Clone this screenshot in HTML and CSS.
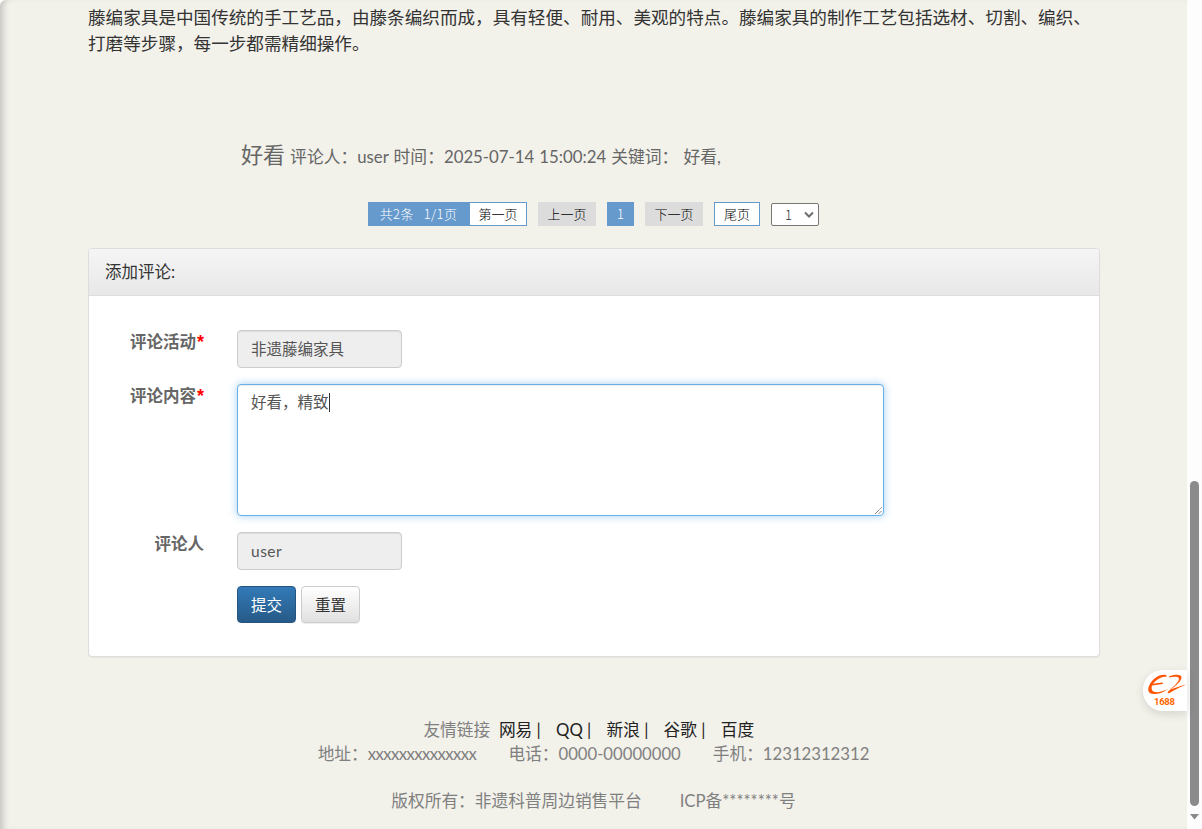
FILE: index.html
```html
<!DOCTYPE html>
<html lang="zh">
<head>
<meta charset="utf-8">
<title>评论</title>
<link rel="stylesheet" href="styles.css">
</head>
<body>
<div class="page">
  <main class="main">
    <p class="intro">藤编家具是中国传统的手工艺品，由藤条编织而成，具有轻便、耐用、美观的特点。藤编家具的制作工艺包括选材、切割、编织、打磨等步骤，每一步都需精细操作。</p>
    <div class="comment"><span class="comment-title">好看</span> 评论人：user 时间：2025-07-14 15:00:24 关键词： 好看,</div>
    <nav class="pager">
      <div class="pager-group">
        <span class="pg pg-info">共2条&nbsp;&nbsp;&nbsp;1/1页</span>
        <a class="pg pg-white pg-first">第一页</a>
      </div>
      <a class="pg pg-gray">上一页</a>
      <span class="pg pg-cur">1</span>
      <a class="pg pg-gray">下一页</a>
      <a class="pg pg-white pg-last">尾页</a>
      <div class="select-wrap">
        <select class="pg-select"><option>1</option></select>
        <svg class="chev" width="10" height="7" viewBox="0 0 10 7"><path d="M1 1.500 5 5.500 9 1.500" fill="none" stroke="#6e6e6e" stroke-width="2"/></svg>
      </div>
    </nav>
    <section class="panel">
      <header class="panel-head">添加评论:</header>
      <form class="panel-body">
        <div class="row row-a">
          <label class="lbl">评论活动<em>*</em></label>
          <div class="field field-ro">非遗藤编家具</div>
        </div>
        <div class="row row-b">
          <label class="lbl">评论内容<em>*</em></label>
          <div class="area">好看，精致<i class="caret"></i>
            <svg class="grip" width="9" height="9" viewBox="0 0 9 9"><path d="M1 8 8 1M4.500 8 8 4.500" stroke="#555" fill="none" stroke-width="1" stroke-dasharray="1 .6"/></svg>
          </div>
        </div>
        <div class="row row-c">
          <label class="lbl">评论人</label>
          <div class="field field-ro field-user">user</div>
        </div>
        <div class="row btns">
          <button type="button" class="btn btn-primary">提交</button>
          <button type="button" class="btn btn-default">重置</button>
        </div>
      </form>
    </section>
    <footer class="foot">
      <div class="foot-links">友情链接 <a>网易 |</a> <a>QQ |</a> <a>新浪 |</a> <a>谷歌 |</a> <a>百度</a> </div>
      <div class="foot-info"><span>地址：<span class="xs">xxxxxxxxxxxxxx</span></span><span>电话：0000-00000000</span><span>手机：12312312312</span></div>
      <div class="foot-copy"><span>版权所有：非遗科普周边销售平台</span><span>ICP备********号</span></div>
    </footer>
  </main>
  <aside class="scrollbar">
    <div class="thumb"></div>
    <svg class="arrow" width="9" height="6" viewBox="0 0 9 6"><path d="M0 0H9L4.500 5.500Z" fill="#8a8a8a"/></svg>
  </aside>
  <div class="float-logo">
    <svg width="40" height="24" viewBox="0 0 40 24">
      <path d="M19 2C12 1 5 6 2 13c-2 5 0 8 5 8 5 0 10-2 14-5-5 2.500-10 3.500-13 3-3-.5-4-3-3-6.500l11-1.500-.5-1.500-9.500 1.300C9 7 14 3.500 20 3.500Z" fill="#f50"/>
      <path d="M22 3.500C27 1 34 1 34.500 4 35 7.500 29 12.500 24 16.500c5-2 10-4 15.500-5C34 13.500 28 16.500 22.500 20c-1.500.6-2.500-.3-1.300-1.500C26 14 32 9 32 5.500 32 3.500 27 3 22 4.500Z" fill="#f50"/>
    </svg>
    <span class="logo-num">1688</span>
  </div>
</div>
</body>
</html>
```

FILE: styles.css
```css
* { box-sizing: border-box; }
html, body { margin: 0; height: 100%; overflow: hidden; }
body {
  font-family: "Lato", "Noto Sans CJK SC", sans-serif;
  font-size: 16px;
  color: #666;
  background: #fff;
}
.page { position: relative; display: flex; width: 1202px; height: 829px; overflow: hidden; }
.main {
  width: 1187px;
  height: 829px;
  flex: none;
  overflow: hidden;
  background: #f2f1ea;
  box-shadow: inset 7px 0 6px -4px #c4c4c0;
  border-top-left-radius: 6px;
  padding: 5px 87px 0 88px;
}
.intro { margin: 0; width: 1012px; line-height: 26px; color: #333; font-size: 17.6px; }
.comment { margin: 79.500px 0 0 153px; height: 36px; line-height: 36px; font-size: 16.8px; color: #666; white-space: nowrap; word-spacing: .8px; }
.comment-title { font-size: 22px; }

.pager { display: flex; align-items: flex-start; margin: 29.500px 0 0 280px; font-family: "Noto Sans CJK SC", sans-serif; font-size: 13px; font-weight: 300; }
.pager-group { display: flex; margin-right: 11px; }
.pg { display: block; height: 24px; line-height: 24px; text-align: center; color: #000; white-space: nowrap; }
.pg-info { width: 101px; background: #6699cc; color: #fff; letter-spacing: .4px; }
.pg-white { background: #fff; border: 1px solid #6699cc; line-height: 22px; }
.pg-first { width: 58px; }
.pg-last { width: 46px; margin-right: 11px; }
.pg-gray { width: 58px; background: #dcdcdc; margin-right: 11px; }
.pg-cur { width: 27px; background: #6699cc; color: #fff; margin-right: 11px; }
.select-wrap { position: relative; width: 48px; height: 23px; margin-top: 1px; }
.pg-select { display: block; appearance: none; -webkit-appearance: none; width: 48px; height: 23px; font: inherit; color: #333; background: #fff; border: 1px solid #767676; border-radius: 2px; padding-left: 13px; }
.chev { position: absolute; right: 5px; top: 8px; pointer-events: none; }

.panel { margin-top: 22px; width: 1012px; height: 409px; background: #fff; border: 1px solid #ddd; border-radius: 4px; box-shadow: 0 1px 1px rgba(0,0,0,.05); overflow: hidden; }
.panel-head { height: 47px; padding: 0 16px; line-height: 47px; color: #333; font-size: 16.5px; background: linear-gradient(#f5f5f5, #e8e8e8); border-bottom: 1px solid #ddd; }
.panel-body { padding: 34px 0 0; }
.row { display: flex; align-items: flex-start; }
.row-b { margin-top: 16px; }
.row-c { margin-top: 16px; }
.btns { margin-top: 16px; padding-left: 148px; gap: 5px; }
.lbl { width: 115px; flex: none; text-align: right; font-size: 16.5px; font-weight: 700; color: #666; line-height: 24px; margin-right: 33px; }
.lbl em { margin-left: 1px; font-family: "Liberation Sans", sans-serif; font-size: 18px; color: #f00; font-style: normal; }
.field { width: 165px; height: 38px; padding: 0 13px; line-height: 36px; font-size: 15.5px; color: #555; border: 1px solid #ccc; border-radius: 4px; }
.field-ro { background: #eee; box-shadow: inset 0 1px 1px rgba(0,0,0,.075); }
.field-user { letter-spacing: .5px; }
.area { position: relative; width: 647px; height: 132px; padding: 6px 13px; line-height: 22px; font-size: 15.5px; color: #555; background: #fff; border: 1px solid #66afe9; border-radius: 4px; box-shadow: inset 0 1px 1px rgba(0,0,0,.075), 0 0 8px rgba(102,175,233,.6); }
.caret { display: inline-block; width: 1px; height: 19px; background: #333; vertical-align: -4px; }
.grip { position: absolute; right: 0; bottom: 0; }
.btn { width: 59px; height: 37px; padding: 0 0 2px; font: inherit; font-size: 15.5px; border-radius: 4px; }
.btn-primary { color: #fff; background: linear-gradient(#337ab7, #265a88); border: 1px solid #245580; }
.btn-default { color: #333; background: linear-gradient(#fff, #e0e0e0); border: 1px solid #ccc; box-shadow: inset 0 1px 0 rgba(255,255,255,.15), 0 1px 1px rgba(0,0,0,.075); }

.foot { margin: 61px -87px 0 -88px; text-align: center; color: #808080; font-size: 16.7px; line-height: 24px; }
.foot-links { padding-right: 3px; }
.foot-links a { color: #222; margin-left: 4.500px; margin-right: 6.500px; }
.foot-info { display: flex; justify-content: center; gap: 32px; }
.xs { letter-spacing: -.55px; }
.foot-copy { display: flex; justify-content: center; gap: 38px; margin-top: 23px; }

.scrollbar { position: relative; width: 15px; flex: none; background: #fdfdfd; }
.thumb { position: absolute; left: 3px; top: 481px; width: 9px; height: 325px; background: #8b8b8b; border-radius: 5px; }
.arrow { position: absolute; left: 3px; top: 814px; }
.float-logo { position: absolute; left: 1143px; top: 670px; width: 44px; height: 41px; padding: 3px 0 0 4px; background: #fff; border-radius: 20px 0 0 20px; box-shadow: 0 3px 10px rgba(0,0,0,.12); }
.float-logo svg { display: block; }
.logo-num { display: block; margin: -1px 0 0 7px; font: 700 9.500px/11px "Roboto", sans-serif; letter-spacing: -.3px; color: #f60; }
```
